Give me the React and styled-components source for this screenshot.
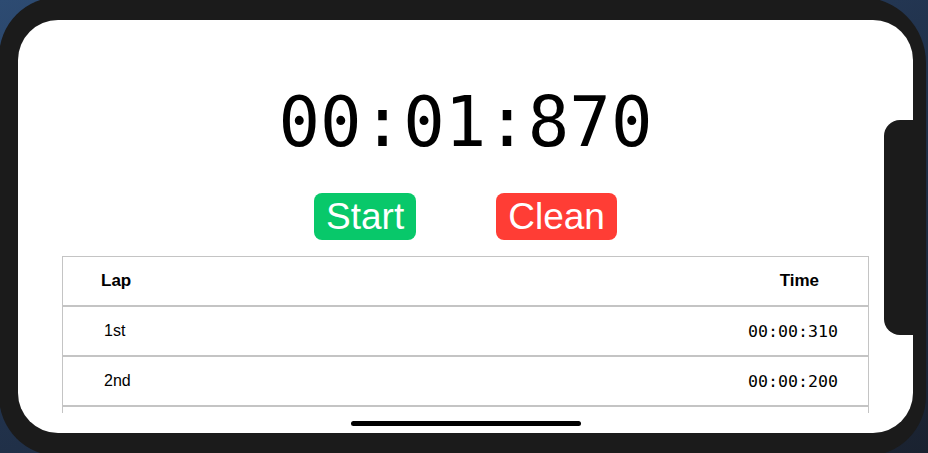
import React from 'react';
import styled, { createGlobalStyle } from 'styled-components';

const Global = createGlobalStyle`
  html, body {
    margin: 0;
    padding: 0;
    overflow: hidden;
  }
  body {
    width: 928px;
    height: 453px;
    background: linear-gradient(160deg, #2d4b72 0%, #22344f 45%, #1a2230 100%);
    font-family: "Liberation Sans", Arial, sans-serif;
  }
`;

const Device = styled.div`
  box-sizing: border-box;
  margin: -3px 0 0 -1px;
  width: 927px;
  height: 459px;
  padding: 23px 13px 23px 19px;
  background: #1b1b1b;
  border-radius: 60px 66px 60px 60px;
`;

const Screen = styled.div`
  position: relative;
  height: 413px;
  background: #fff;
  border-radius: 40px;
  overflow: hidden;
  display: flex;
  flex-direction: column;
  align-items: center;
`;

const Notch = styled.div`
  position: absolute;
  right: 0;
  top: 100px;
  width: 29px;
  height: 215px;
  background: #1b1b1b;
  border-radius: 16px 0 0 16px;
`;

const HomeBar = styled.div`
  position: absolute;
  left: 333px;
  bottom: 7px;
  width: 230px;
  height: 5px;
  border-radius: 3px;
  background: #000;
`;

const Timer = styled.div`
  margin-top: 62px;
  height: 80px;
  line-height: 80px;
  font-family: "DejaVu Sans Mono", "Liberation Mono", monospace;
  font-size: 69px;
  color: #000;
`;

const Buttons = styled.div`
  margin-top: 31px;
  display: flex;
  gap: 80px;
`;

const Button = styled.button`
  height: 47px;
  padding: 0 12px;
  border: none;
  border-radius: 8px;
  background: ${p => p.$color};
  color: #fff;
  font-family: "Liberation Sans", Arial, sans-serif;
  font-size: 37px;
  line-height: 47px;
`;

const Table = styled.div`
  margin-top: 16px;
  width: 807px;
  height: 157px;
  overflow: hidden;
`;

const Row = styled.div`
  box-sizing: border-box;
  height: ${p => (p.$head ? 49 : 50)}px;
  display: flex;
  align-items: center;
  justify-content: space-between;
  padding: ${p => (p.$head ? '0 49px 0 38px' : '0 30px 0 41px')};
  border-left: 1px solid #c4c4c4;
  border-right: 1px solid #c4c4c4;
  border-top: ${p => (p.$head ? '1px' : '2px')} solid #c4c4c4;
  font-size: ${p => (p.$head ? 17 : 16)}px;
  font-weight: ${p => (p.$head ? 700 : 400)};
  color: #000;
`;

const LapTime = styled.span`
  font-family: "DejaVu Sans Mono", "Liberation Mono", monospace;
  font-size: 16.6px;
`;

const laps = [
  { name: '1st', time: '00:00:310' },
  { name: '2nd', time: '00:00:200' },
];

export default function App() {
  return (
    <>
      <Global />
      <Device>
        <Screen>
          <Timer>00:01:870</Timer>
          <Buttons>
            <Button $color="#08c86a">Start</Button>
            <Button $color="#ff3d35">Clean</Button>
          </Buttons>
          <Table>
            <Row $head>
              <span>Lap</span>
              <span>Time</span>
            </Row>
            {laps.map(l => (
              <Row key={l.name}>
                <span>{l.name}</span>
                <LapTime>{l.time}</LapTime>
              </Row>
            ))}
            <Row />
          </Table>
          <Notch />
          <HomeBar />
        </Screen>
      </Device>
    </>
  );
}
